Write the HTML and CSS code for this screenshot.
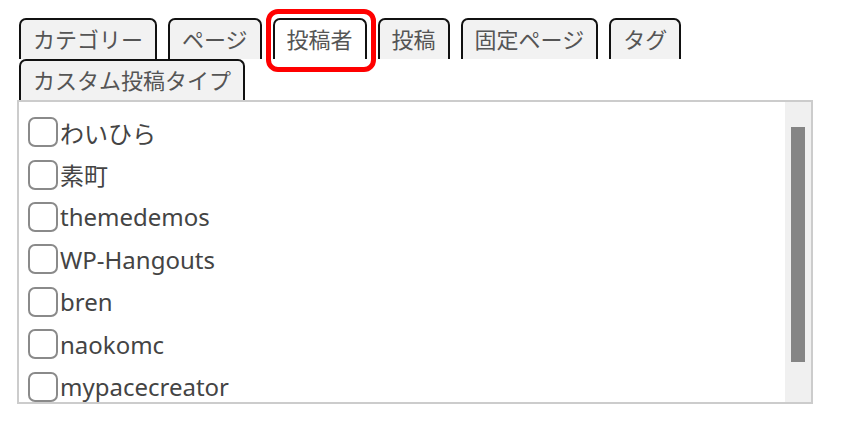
FILE: index.html
```html
<!DOCTYPE html>
<html lang="ja">
<head>
    <meta charset="UTF-8">
    <meta name="viewport" content="width=device-width, initial-scale=1.0">
    <title>投稿者</title>
    <link rel="stylesheet" href="styles.css">
</head>
<body>
    <div class="picker">
        <ul class="tabs">
            <li class="tab">カテゴリー</li>
            <li class="tab">ページ</li>
            <li class="tab active">投稿者</li>
            <li class="tab">投稿</li>
            <li class="tab">固定ページ</li>
            <li class="tab">タグ</li>
            <li class="tab">カスタム投稿タイプ</li>
        </ul>

        <div class="panel">
            <div class="author-list">
                <label class="author-item"><input type="checkbox"><span>わいひら</span></label>
                <label class="author-item"><input type="checkbox"><span>素町</span></label>
                <label class="author-item"><input type="checkbox"><span>themedemos</span></label>
                <label class="author-item"><input type="checkbox"><span>WP-Hangouts</span></label>
                <label class="author-item"><input type="checkbox"><span>bren</span></label>
                <label class="author-item"><input type="checkbox"><span>naokomc</span></label>
                <label class="author-item"><input type="checkbox"><span>mypacecreator</span></label>
            </div>
            <div class="scrollbar">
                <div class="scrollbar-thumb"></div>
            </div>
        </div>
    </div>
</body>
</html>
```

FILE: styles.css
```css
* {
    margin: 0;
    padding: 0;
    box-sizing: border-box;
}

body {
    font-family: "Noto Sans", "Noto Sans CJK JP", sans-serif;
    background: #fff;
    color: #444;
}

.picker {
    padding: 18px 0 0 17px;
    width: 813px;
}

.tabs {
    list-style: none;
    display: flex;
    flex-wrap: wrap;
    column-gap: 11px;
    padding-left: 2px;
}

.tab {
    position: relative;
    height: 41px;
    padding: 0 12px;
    border: 2px solid #111;
    border-bottom: none;
    border-radius: 7px 7px 0 0;
    background: #f2f2f2;
    color: #555;
    font-size: 22px;
    line-height: 38px;
    white-space: nowrap;
}

.tab.active {
    background: #fff;
}

/* marca vermelha em volta da aba ativa */
.tab.active::after {
    content: '';
    position: absolute;
    top: -11px;
    left: -9px;
    right: -11px;
    bottom: -13px;
    border: 5px solid #f00;
    border-radius: 12px;
}

.panel {
    display: flex;
    height: 304px;
    border: 2px solid #ccc;
    background: #fff;
}

.author-list {
    flex: 1;
    overflow: hidden;
    padding: 9px 0 0 9px;
}

.author-item {
    display: flex;
    align-items: center;
    height: 42.4px;
    font-size: 24px;
    color: #444;
}

.author-item input[type="checkbox"] {
    appearance: none;
    -webkit-appearance: none;
    width: 30px;
    height: 30px;
    margin-right: 2px;
    border: 2px solid #8a8a8a;
    border-radius: 7px;
    background: #fff;
    flex-shrink: 0;
}

.scrollbar {
    width: 26px;
    background: #f0f0f0;
    padding: 25px 6px 0;
}

.scrollbar-thumb {
    height: 235px;
    background: #858585;
}
```
